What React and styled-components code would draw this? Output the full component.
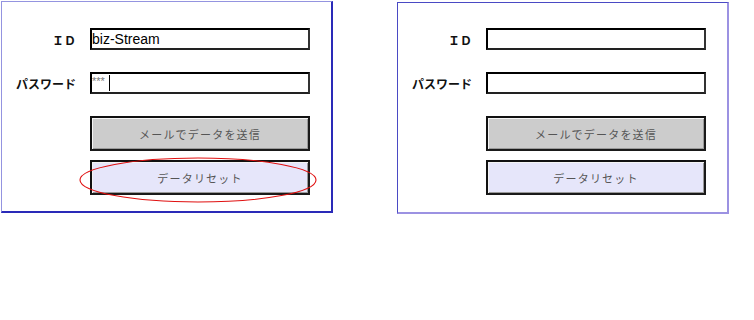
import React from 'react';
import styled, { createGlobalStyle } from 'styled-components';

const GlobalStyle = createGlobalStyle`
  body {
    margin: 0;
    background: #ffffff;
    font-family: "Noto Sans CJK JP", "Liberation Sans", sans-serif;
  }
`;

// Styled components
const Page = styled.div`
  display: flex;
  align-items: flex-start;
  gap: 64px;
  padding: 1px 0 0 1px;
`;

const Panel = styled.div`
  box-sizing: border-box;
  width: 332px;
  height: 212px;
  margin-top: ${(p) => (p.$shift ? '1px' : '0')};
  padding-top: ${(p) => (p.$shift ? '25px' : '26px')};
  border-style: solid;
  border-width: 1px 2px 2px 1px;
  border-color: ${(p) =>
    p.$shift ? '#4a4ac4 #9c92e2 #9c92e2 #4a4ac4' : '#9494e0 #2a2ab8 #2a2ab8 #9494e0'};
  background: #ffffff;
`;

const Form = styled.div`
  display: grid;
  grid-template-columns: 74px 220px;
  column-gap: 14px;
  align-items: center;
`;

const Label = styled.div`
  text-align: right;
  font-size: 12px;
  font-weight: 700;
  color: #111;
  letter-spacing: ${(p) => (p.$wide ? '0px' : '0')};
  margin-top: ${(p) => p.$top || '0'};
`;

const Field = styled.div`
  box-sizing: border-box;
  height: 22px;
  margin-top: ${(p) => p.$top || '0'};
  display: flex;
  align-items: center;
  border: 2px solid;
  border-color: #000 #333 #222 #000;
  background: #fff;
  font-family: "Liberation Sans", Arial, sans-serif;
  font-size: 14px;
  color: #000;
  white-space: nowrap;
  overflow: hidden;
`;

const Masked = styled.span`
  font-size: 11px;
  color: #777;
  align-self: flex-start;
  line-height: 12px;
  margin-top: 1px;
`;

const Caret = styled.span`
  display: inline-block;
  width: 1px;
  height: 16px;
  margin-left: 4px;
  background: #000;
`;

const Spacer = styled.div``;

const ButtonWrap = styled.div`
  position: relative;
  margin-top: ${(p) => p.$top || '0'};
`;

const Button = styled.button`
  box-sizing: border-box;
  display: block;
  width: 100%;
  height: 35px;
  padding: 0;
  border: 2px solid;
  border-color: #111 #1a1a1a #1a1a1a #111;
  box-shadow: inset 1px 1px 0 #f4f4f4, inset -1px -1px 0 #9a9a9a;
  background: ${(p) => (p.$reset ? '#e6e6fa' : '#cccccc')};
  font-family: "Noto Sans CJK JP", sans-serif;
  font-size: 11px;
  letter-spacing: 1.2px;
  color: #555;
  cursor: pointer;
`;

const Highlight = styled.svg`
  position: absolute;
  left: -11px;
  top: -3px;
  width: 238px;
  height: 46px;
  overflow: visible;
  pointer-events: none;
`;

const LoginPanel = ({ shift, id, masked, circled }) => (
  <Panel $shift={shift}>
    <Form>
      <Label>ＩＤ</Label>
      <Field>{id}</Field>

      <Label $top="22px">パスワード</Label>
      <Field $top="22px">
        {masked && (
          <>
            <Masked>***</Masked>
            <Caret />
          </>
        )}
      </Field>

      <Spacer />
      <ButtonWrap $top="22px">
        <Button>メールでデータを送信</Button>
      </ButtonWrap>

      <Spacer />
      <ButtonWrap $top="9px">
        <Button $reset>データリセット</Button>
        {circled && (
          <Highlight viewBox="0 0 238 46">
            <ellipse cx="119" cy="23" rx="118" ry="22" fill="none" stroke="#e01010" strokeWidth="1.1" />
          </Highlight>
        )}
      </ButtonWrap>
    </Form>
  </Panel>
);

const App = () => {
  return (
    <>
      <GlobalStyle />
      <Page>
        <LoginPanel id="biz-Stream" masked circled />
        <LoginPanel shift />
      </Page>
    </>
  );
};

export default App;
